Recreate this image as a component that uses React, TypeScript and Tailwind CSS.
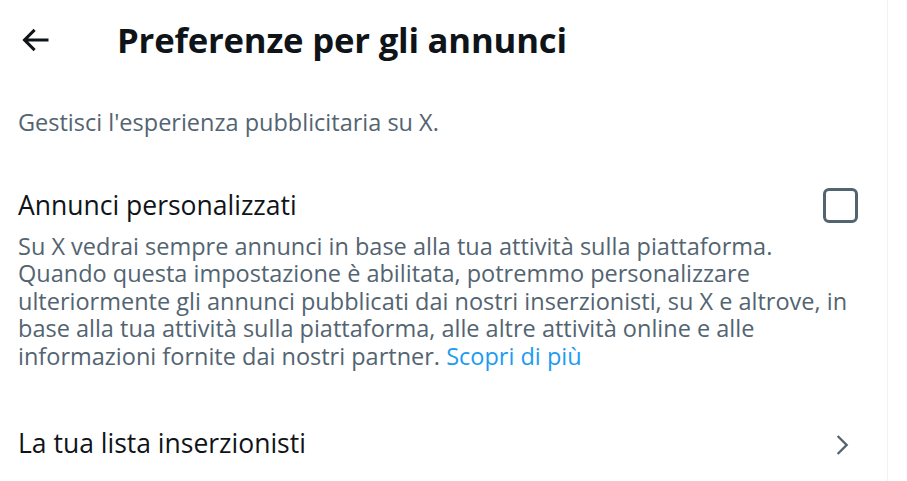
import React from "react";

const font = { fontFamily: '"Open Sans", "Noto Sans", sans-serif' };

const lines = [
  "Su X vedrai sempre annunci in base alla tua attività sulla piattaforma.",
  "Quando questa impostazione è abilitata, potremmo personalizzare",
  "ulteriormente gli annunci pubblicati dai nostri inserzionisti, su X e altrove, in",
  "base alla tua attività sulla piattaforma, alle altre attività online e alle",
];

export default function App() {
  return (
    <div className="w-full h-[481px] bg-white overflow-hidden" style={font}>
      <div className="w-[888px] h-[481px] border-r border-[#eff3f4] flex flex-col">
        {/* Header */}
        <div className="h-[82px] flex items-start pt-[19px]">
          <div className="w-[117px] h-[42px] flex items-center pl-[17px]">
            <svg viewBox="0 0 24 24" className="w-[36px] h-[36px] fill-[#0f1419]">
              <path d="M7.414 13l5.043 5.04-1.414 1.42L3.586 12l7.457-7.46 1.414 1.42L7.414 11H21v2H7.414z" />
            </svg>
          </div>
          <h1 className="text-[34.7px] leading-[42px] font-bold text-[#0f1419] tracking-[-0.2px]">
            Preferenze per gli annunci
          </h1>
        </div>
        {/* Subtitle */}
        <div className="pt-[27px] pl-[18px]">
          <p className="text-[23.5px] leading-[27.5px] text-[#536471]">
            Gestisci l'esperienza pubblicitaria su X.
          </p>
        </div>
        {/* Personalized ads */}
        <div className="pt-[51px] pl-[18px] pr-[28px]">
          <div className="flex items-start justify-between">
            <span className="text-[26.5px] leading-[34px] text-[#0f1419]">Annunci personalizzati</span>
            <div className="w-[35px] h-[35px] mr-[1px] rounded-[6px] border-[3px] border-[#536471]" />
          </div>
          <div className="mt-[10px] flex flex-col text-[23.5px] leading-[27.5px] text-[#536471] whitespace-nowrap">
            {lines.map((l) => (
              <div key={l} className="h-[27.5px]">
                {l}
              </div>
            ))}
            <div className="h-[27.5px]">
              informazioni fornite dai nostri partner.{" "}
              <span className="text-[#1d9bf0]">Scopri di più</span>
            </div>
          </div>
        </div>
        {/* Advertiser list */}
        <div className="mt-[56px] pl-[18px] pr-[31px] flex items-center justify-between h-[34px]">
          <span className="text-[26.5px] leading-[34px] text-[#0f1419]">La tua lista inserzionisti</span>
          <svg viewBox="0 0 24 24" className="w-[28px] h-[28px] mt-[4px] fill-[#536471]">
            <path d="M14.586 12L7.543 4.96l1.414-1.42L17.414 12l-8.457 8.46-1.414-1.42L14.586 12z" />
          </svg>
        </div>
      </div>
    </div>
  );
}
